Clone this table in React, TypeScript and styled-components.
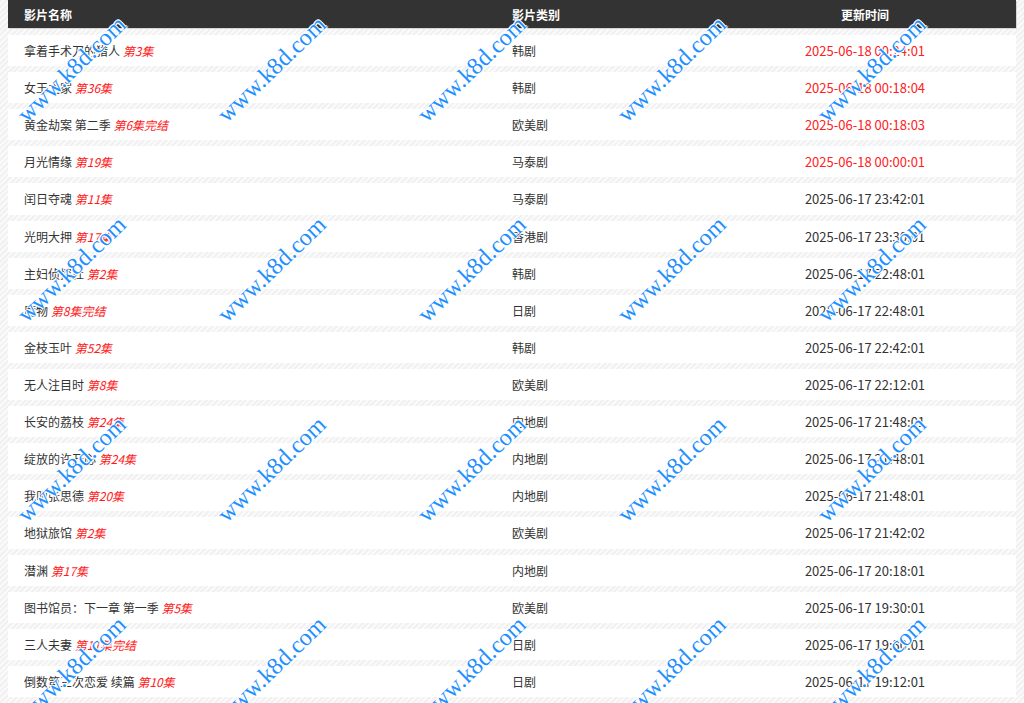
import React from "react";
import styled, { createGlobalStyle } from "styled-components";

const GlobalStyle = createGlobalStyle`
  html, body { margin: 0; padding: 0; overflow: hidden; }
  body {
    background: repeating-linear-gradient(135deg, #f1f1f1 0 2px, #fafafa 2px 4px);
    font-family: "Noto Sans CJK SC", "Noto Sans", sans-serif;
    font-size: 12px;
    color: #333;
  }
`;

const Page = styled.div`
  position: relative;
  height: 703px;
  padding: 0 8px;
  overflow: hidden;
`;

const cols = "488px 218px 1fr";

const HeaderRow = styled.div`
  display: grid;
  grid-template-columns: ${cols};
  height: 28px;
  align-items: center;
  background: #333;
  color: #fff;
  font-weight: bold;
  box-shadow: 1px 1px 0 #d6d6d6;
`;

const HeadCell = styled.div<{ $center?: boolean }>`
  padding-left: ${(p) => (p.$center ? "0" : "16px")};
  text-align: ${(p) => (p.$center ? "center" : "left")};
`;

const Body = styled.div`
  display: flex;
  flex-direction: column;
  gap: 6px;
  padding-top: 7px;
`;

const Row = styled.div`
  display: grid;
  grid-template-columns: ${cols};
  height: 31.12px;
  align-items: center;
  background: #fff;
`;

const Cell = styled.div`
  padding-left: 16px;
  white-space: nowrap;
`;

const TimeCell = styled.div<{ $hot?: boolean }>`
  text-align: center;
  font-size: 13px;
  color: ${(p) => (p.$hot ? "#ff2020" : "#333")};
  white-space: nowrap;
`;

const Tag = styled.em`
  color: #ff1a1a;
  font-style: italic;
`;

const Overlay = styled.div`
  position: absolute;
  left: -28px;
  top: -31px;
  display: grid;
  grid-template-columns: repeat(5, 200px);
  grid-auto-rows: 200px;
  pointer-events: none;
`;

const Mark = styled.div`
  display: flex;
  align-items: center;
  justify-content: center;
  span {
    display: block;
    transform: rotate(-44deg);
    font-family: "Liberation Serif", serif;
    font-size: 24px;
    color: #1e8fff;
    white-space: nowrap;
    text-shadow: 0 0 1px #fff, 1px 1px 0 #fff, -1px -1px 0 #fff, 1px -1px 0 #fff, -1px 1px 0 #fff;
  }
`;

type Item = { name: string; tag: string; cat: string; time: string; hot?: boolean };

const items: Item[] = [
  { name: "拿着手术刀的猎人", tag: "第3集", cat: "韩剧", time: "2025-06-18 00:24:01", hot: true },
  { name: "女王之家", tag: "第36集", cat: "韩剧", time: "2025-06-18 00:18:04", hot: true },
  { name: "黄金劫案 第二季", tag: "第6集完结", cat: "欧美剧", time: "2025-06-18 00:18:03", hot: true },
  { name: "月光情缘", tag: "第19集", cat: "马泰剧", time: "2025-06-18 00:00:01", hot: true },
  { name: "闰日夺魂", tag: "第11集", cat: "马泰剧", time: "2025-06-17 23:42:01" },
  { name: "光明大押", tag: "第17集", cat: "香港剧", time: "2025-06-17 23:30:01" },
  { name: "主妇侦探社", tag: "第2集", cat: "韩剧", time: "2025-06-17 22:48:01" },
  { name: "魔物", tag: "第8集完结", cat: "日剧", time: "2025-06-17 22:48:01" },
  { name: "金枝玉叶", tag: "第52集", cat: "韩剧", time: "2025-06-17 22:42:01" },
  { name: "无人注目时", tag: "第8集", cat: "欧美剧", time: "2025-06-17 22:12:01" },
  { name: "长安的荔枝", tag: "第24集", cat: "内地剧", time: "2025-06-17 21:48:01" },
  { name: "绽放的许开心", tag: "第24集", cat: "内地剧", time: "2025-06-17 21:48:01" },
  { name: "我叫张思德", tag: "第20集", cat: "内地剧", time: "2025-06-17 21:48:01" },
  { name: "地狱旅馆", tag: "第2集", cat: "欧美剧", time: "2025-06-17 21:42:02" },
  { name: "潜渊", tag: "第17集", cat: "内地剧", time: "2025-06-17 20:18:01" },
  { name: "图书馆员：下一章 第一季", tag: "第5集", cat: "欧美剧", time: "2025-06-17 19:30:01" },
  { name: "三人夫妻", tag: "第11集完结", cat: "日剧", time: "2025-06-17 19:30:01" },
  { name: "倒数第三次恋爱 续篇", tag: "第10集", cat: "日剧", time: "2025-06-17 19:12:01" },
];

export default function App() {
  return (
    <>
      <GlobalStyle />
      <Page>
        <HeaderRow>
          <HeadCell>影片名称</HeadCell>
          <HeadCell>影片类别</HeadCell>
          <HeadCell $center>更新时间</HeadCell>
        </HeaderRow>
        <Body>
          {items.map((it, i) => (
            <Row key={i}>
              <Cell>
                {it.name} <Tag>{it.tag}</Tag>
              </Cell>
              <Cell>{it.cat}</Cell>
              <TimeCell $hot={it.hot}>{it.time}</TimeCell>
            </Row>
          ))}
        </Body>
        <Overlay>
          {Array.from({ length: 20 }).map((_, i) => (
            <Mark key={i}>
              <span>www.k8d.com</span>
            </Mark>
          ))}
        </Overlay>
      </Page>
    </>
  );
}
